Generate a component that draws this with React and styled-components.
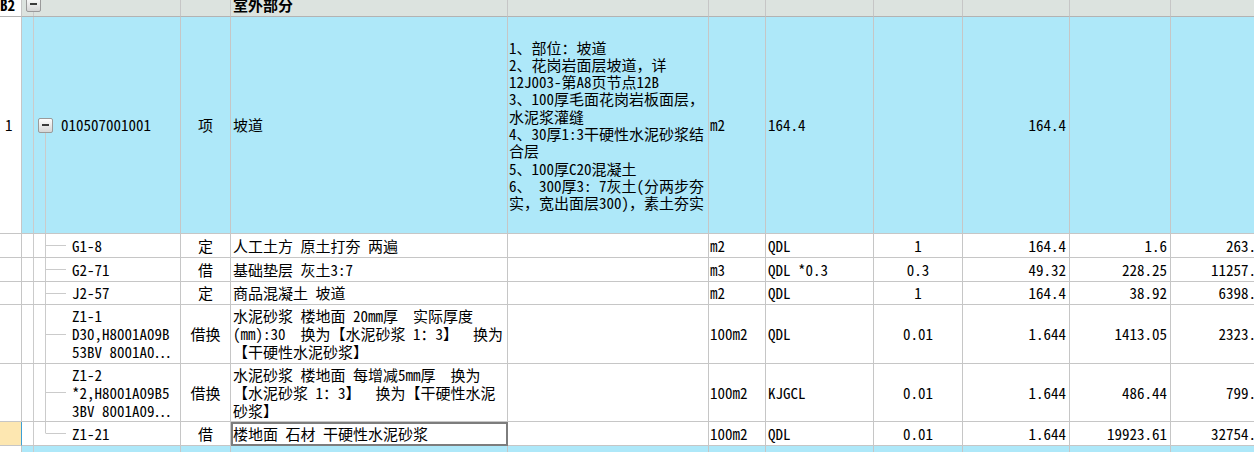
import React from 'react';
import styled, { createGlobalStyle, css } from 'styled-components';

const GlobalStyle = createGlobalStyle`
  html, body {
    margin: 0;
    padding: 0;
    background: #fff;
    overflow: hidden;
  }
  body {
    font-family: "Noto Sans Mono CJK SC", "Noto Sans CJK SC", "Liberation Mono", monospace;
    font-size: 15px;
    color: #000;
  }
`;

const LINE = '#c6c6c6';
const GUIDE = '#cbcbcb';
const BG = { head: '#dce3df', item: '#aee8f9', child: '#ffffff' };

// column widths include the 1px right border
const COLS = [
  { w: 22 },
  { w: 159 },
  { w: 50, align: 'center' },
  { w: 277, pl: 2 },
  { w: 201, pl: 1 },
  { w: 57, pl: 1 },
  { w: 108, pl: 2 },
  { w: 89, align: 'center' },
  { w: 107, align: 'flex-end', pr: 3 },
  { w: 101, align: 'flex-end', pr: 3 },
  { w: 104, align: 'flex-end', pr: 3 },
];

const Viewport = styled.div`
  width: 1254px;
  height: 452px;
  overflow: hidden;
  background: #fff;
`;

const Table = styled.div`
  display: flex;
  flex-direction: column;
  width: max-content;
  margin-top: -7px;
`;

const Row = styled.div`
  display: flex;
  flex: none;
  height: ${p => p.$h}px;
`;

const Cell = styled.div`
  flex: none;
  box-sizing: border-box;
  width: ${p => p.$w}px;
  display: flex;
  align-items: center;
  justify-content: ${p => p.$align || 'flex-start'};
  padding: 0 ${p => p.$pr || 0}px 0 ${p => p.$pl || 0}px;
  border-right: 1px solid ${p => p.$edge || LINE};
  border-bottom: 1px solid ${p => p.$under || LINE};
  background: ${p => p.$bg};
  overflow: hidden;
  white-space: pre;
  line-height: 18px;
  font-weight: ${p => (p.$bold ? 700 : 400)};
  ${p => p.$focus && css`
    outline: 2px solid #7d7d7d;
    outline-offset: -2px;
  `}
`;

const Lines = styled.div`
  display: flex;
  flex-direction: column;
  line-height: ${p => p.$lh || 18}px;
`;

const Guide = styled.span`
  flex: none;
  width: 12px;
  align-self: stretch;
  background: linear-gradient(${GUIDE}, ${GUIDE}) no-repeat right top / 1px ${p => (p.$half ? '50%' : '100%')};
`;

const Branch = styled.span`
  flex: none;
  width: 20px;
  align-self: stretch;
  background: linear-gradient(${GUIDE}, ${GUIDE}) no-repeat left center / 100% 1px;
`;

const ExpSlot = styled.span`
  flex: none;
  box-sizing: border-box;
  width: 24px;
  align-self: stretch;
  display: flex;
  align-items: center;
  padding-left: 4px;
  background: linear-gradient(${GUIDE}, ${GUIDE}) no-repeat 11px 100% / 1px 50%;
`;

const Expander = styled.span`
  position: relative;
  flex: none;
  box-sizing: border-box;
  width: 15px;
  height: 15px;
  border: 1px solid #9a9a9a;
  border-radius: 2px;
  background: linear-gradient(#fdfdfd, #d6d6d6);
  &::after {
    content: '';
    position: absolute;
    left: 3px;
    right: 3px;
    top: 5px;
    height: 2px;
    background: #3b3b3b;
  }
`;

const Code = styled.span`
  margin-left: ${p => p.$gap}px;
`;

const DESC = [
  '1、部位：坡道',
  '2、花岗岩面层坡道，详',
  '12J003-第A8页节点12B',
  '3、100厚毛面花岗岩板面层，',
  '水泥浆灌缝',
  '4、30厚1:3干硬性水泥砂浆结',
  '合层',
  '5、100厚C20混凝土',
  '6、 300厚3: 7灰土(分两步夯',
  '实，宽出面层300)，素土夯实',
];

const ROWS = [
  { kind: 'head', h: 24, no: 'B2', cells: ['', '室外部分', '', '', '', '', '', '', ''] },
  { kind: 'item', h: 217, no: '1', code: ['010507001001'], cells: ['项', '坡道', DESC, 'm2', '164.4', '', '164.4', '', ''] },
  { kind: 'child', h: 24, code: ['G1-8'], cells: ['定', '人工土方 原土打夯 两遍', '', 'm2', 'QDL', '1', '164.4', '1.6', '263.04'] },
  { kind: 'child', h: 24, code: ['G2-71'], cells: ['借', '基础垫层 灰土3:7', '', 'm3', 'QDL *0.3', '0.3', '49.32', '228.25', '11257.29'] },
  { kind: 'child', h: 23, code: ['J2-57'], cells: ['定', '商品混凝土 坡道', '', 'm2', 'QDL', '1', '164.4', '38.92', '6398.45'] },
  {
    kind: 'child', h: 59,
    code: ['Z1-1', 'D30,H8001A09B', '53BV 8001A0…'],
    cells: ['借换', ['水泥砂浆 楼地面 20mm厚  实际厚度', '(mm):30  换为【水泥砂浆 1：3】  换为', '【干硬性水泥砂浆】'], '', '100m2', 'QDL', '0.01', '1.644', '1413.05', '2323.05'],
  },
  {
    kind: 'child', h: 58,
    code: ['Z1-2', '*2,H8001A09B5', '3BV 8001A09…'],
    cells: ['借换', ['水泥砂浆 楼地面 每增减5mm厚  换为', '【水泥砂浆 1：3】  换为【干硬性水泥', '砂浆】'], '', '100m2', 'KJGCL', '0.01', '1.644', '486.44', '799.71'],
  },
  { kind: 'child', h: 24, last: true, current: true, code: ['Z1-21'], cells: ['借', '楼地面 石材 干硬性水泥砂浆', '', '100m2', 'QDL', '0.01', '1.644', '19923.61', '32754.41'] },
  { kind: 'item', h: 30, no: '', code: [], cells: ['', '', '', '', '', '', '', '', ''] },
];

const renderValue = (v, lh) => (Array.isArray(v)
  ? <Lines $lh={lh}>{v.map((t, i) => <span key={i}>{t}</span>)}</Lines>
  : v);

function TreeCell({ row, bg, under }) {
  const { kind, code, last } = row;
  return (
    <Cell $w={COLS[1].w} $bg={bg} $under={under}>
      {kind === 'head' && <ExpSlot><Expander /></ExpSlot>}
      {kind === 'item' && code.length > 0 && (
        <>
          <Guide />
          <ExpSlot><Expander /></ExpSlot>
          <Code $gap={3}>{renderValue(code)}</Code>
        </>
      )}
      {kind === 'item' && code.length === 0 && <Guide />}
      {kind === 'child' && (
        <>
          <Guide />
          <Guide $half={last} />
          <Branch />
          <Code $gap={6}>{renderValue(code)}</Code>
        </>
      )}
    </Cell>
  );
}

function GridRow({ row }) {
  const bg = BG[row.kind];
  const under = row.kind === 'head' ? '#b3b3b3' : LINE;
  return (
    <Row $h={row.h}>
      <Cell
        $w={COLS[0].w}
        $pl={row.kind === 'head' ? 0 : 5}
        $bg={row.current ? '#fde7b1' : '#fff'}
        $edge={row.current ? '#3d9fd6' : LINE}
        $under={under}
        $bold={row.kind === 'head'}
      >
        {row.no}
      </Cell>
      <TreeCell row={row} bg={bg} under={under} />
      {row.cells.map((v, i) => {
        const col = COLS[i + 2];
        return (
          <Cell
            key={i}
            $w={col.w}
            $align={col.align}
            $pl={col.pl}
            $pr={col.pr}
            $bg={bg}
            $under={under}
            $bold={row.kind === 'head'}
            $focus={row.current && i === 1}
          >
            {renderValue(v, i === 2 ? 17.3 : 18)}
          </Cell>
        );
      })}
    </Row>
  );
}

export default function App() {
  return (
    <>
      <GlobalStyle />
      <Viewport>
        <Table>
          {ROWS.map((row, i) => <GridRow key={i} row={row} />)}
        </Table>
      </Viewport>
    </>
  );
}
